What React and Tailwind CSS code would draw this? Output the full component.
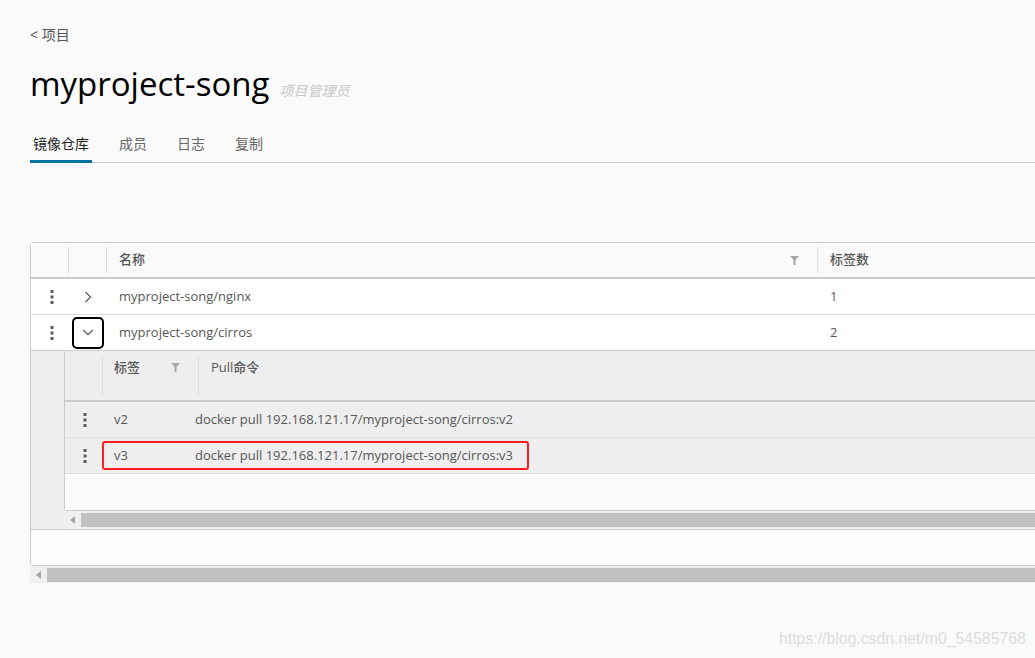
import React from 'react';

const Dots = () => (
    <svg width="4" height="14" viewBox="0 0 4 14" className="fill-[#5c5c5c]">
        <rect x="0.5" y="0" width="3" height="3" />
        <rect x="0.5" y="5.5" width="3" height="3" />
        <rect x="0.5" y="11" width="3" height="3" />
    </svg>
);

const Filter = () => (
    <svg width="9" height="9" viewBox="0 0 9 9" className="fill-[#a8a8a8]">
        <polygon points="0,0 9,0 5.5,4 5.5,9 3.5,9 3.5,4" />
    </svg>
);

const ChevronRight = () => (
    <svg width="8" height="12" viewBox="0 0 8 12" fill="none" className="stroke-[#666]">
        <path d="M1.5 1 L6.5 6 L1.5 11" strokeWidth="1.4" />
    </svg>
);

const ChevronDown = () => (
    <svg width="12" height="7" viewBox="0 0 12 7" fill="none" className="stroke-[#666]">
        <path d="M1 1 L6 5.5 L11 1" strokeWidth="1.4" />
    </svg>
);

const ArrowLeft = () => (
    <svg width="5" height="8" viewBox="0 0 5 8" className="fill-[#a3a3a3]">
        <polygon points="5,0 5,8 0,4" />
    </svg>
);

const Sep = ({ h = 'h-[26px]' }) => <div className={`w-px ${h} bg-[#ddd] shrink-0`} />;

const tabs = ['镜像仓库', '成员', '日志', '复制'];

const tags = [
    { name: 'v2', cmd: 'docker pull 192.168.121.17/myproject-song/cirros:v2' },
    { name: 'v3', cmd: 'docker pull 192.168.121.17/myproject-song/cirros:v3', marked: true },
];

export default function App() {
    return (
        <div className="w-[1035px] h-[658px] overflow-hidden bg-[#fafafa] relative font-['Open_Sans','Noto_Sans_CJK_SC',sans-serif] text-[#565656]">
            <div className="pl-[30px] pt-[26px]">
                <div className="text-[14px] leading-[18px] h-[18px]">&lt; 项目</div>

                <div className="mt-[20px] flex items-baseline h-[40px]">
                    <h1 className="text-[33px] leading-[40px] text-black">myproject-song</h1>
                    <span className="ml-[10px] text-[14px] italic text-[#c8c8c8]">项目管理员</span>
                </div>

                <div className="mt-[31px] flex gap-[24px] border-b border-[#ccc] w-[1100px]">
                    {tabs.map((t, i) => (
                        <div
                            key={t}
                            className={`px-[3px] pb-[7px] text-[14px] leading-[18px] -mb-px ${
                                i === 0 ? 'text-[#222] border-b-[3px] border-[#0072a3]' : 'text-[#666] border-b-[3px] border-transparent'
                            }`}
                        >
                            {t}
                        </div>
                    ))}
                </div>

                <div className="mt-[79px] w-[1100px]">
                    <div className="border border-[#ccc] rounded-[3px] bg-white text-[13px]">
                        {/* header */}
                        <div className="flex items-center h-[36px] bg-[#fafafa] border-b-2 border-[#ccc]">
                            <div className="w-[37px]" />
                            <Sep />
                            <div className="w-[37px]" />
                            <Sep />
                            <div className="w-[710px] flex items-center justify-between pl-[12px] pr-[18px] font-medium">
                                名称
                                <Filter />
                            </div>
                            <Sep />
                            <div className="pl-[12px] font-medium">标签数</div>
                        </div>

                        {/* row 1 */}
                        <div className="flex items-center h-[36px] border-b border-[#ddd]">
                            <div className="w-[38px] flex justify-center pl-[3px]"><Dots /></div>
                            <div className="w-[38px] flex justify-center"><ChevronRight /></div>
                            <div className="w-[711px] pl-[12px]">myproject-song/nginx</div>
                            <div className="pl-[12px]">1</div>
                        </div>

                        {/* row 2 */}
                        <div className="flex items-center h-[36px] border-b border-[#ccc]">
                            <div className="w-[38px] flex justify-center pl-[3px]"><Dots /></div>
                            <div className="w-[38px] flex justify-center">
                                <div className="w-[32px] h-[32px] border-2 border-black rounded-[5px] flex items-center justify-center">
                                    <ChevronDown />
                                </div>
                            </div>
                            <div className="w-[711px] pl-[12px]">myproject-song/cirros</div>
                            <div className="pl-[12px]">2</div>
                        </div>

                        {/* expanded detail */}
                        <div className="flex bg-[#eee] border-b border-[#ccc]">
                            <div className="w-[33px] shrink-0" />
                            <div className="flex-1">
                                <div className="border-l border-b border-[#ccc] rounded-bl-[3px]">
                                    <div className="flex items-start h-[51px] border-b-2 border-[#ccc] pt-[5px]">
                                        <div className="w-[37px]" />
                                        <Sep h="h-[40px]" />
                                        <div className="w-[95px] flex items-center justify-between pl-[11px] pr-[18px] pt-[2px] font-medium leading-[18px]">
                                            标签
                                            <Filter />
                                        </div>
                                        <Sep h="h-[40px]" />
                                        <div className="pl-[12px] pt-[2px] font-medium leading-[18px]">Pull命令</div>
                                    </div>

                                    {tags.map((t) => (
                                        <div key={t.name} className="relative flex items-center h-[36px] border-b border-[#ddd]">
                                            <div className="w-[38px] flex justify-center pl-[1px]"><Dots /></div>
                                            <div className="w-[92px] pl-[11px]">{t.name}</div>
                                            <div>{t.cmd}</div>
                                            {t.marked && (
                                                <div className="absolute left-[37px] top-[3px] w-[427px] h-[29px] border-2 border-[#ff1f1f] rounded-[3px]" />
                                            )}
                                        </div>
                                    ))}

                                    <div className="h-[36px] bg-[#fafafa]" />
                                </div>

                                <div className="flex items-center h-[18px] bg-[#f0f0f0]">
                                    <div className="w-[17px] flex justify-center"><ArrowLeft /></div>
                                    <div className="flex-1 h-[14px] bg-[#c1c1c1]" />
                                </div>
                            </div>
                        </div>

                        <div className="h-[35px] bg-[#fcfcfc]" />
                    </div>

                    <div className="flex items-center h-[17px] bg-[#f0f0f0]">
                        <div className="w-[17px] flex justify-center"><ArrowLeft /></div>
                        <div className="flex-1 h-[14px] bg-[#c1c1c1]" />
                    </div>
                </div>
            </div>

            <div className="absolute left-[779px] top-[630px] text-[15.8px] leading-[18px] text-[#dcdcdc] font-['Liberation_Sans',Arial,sans-serif]">
                https://blog.csdn.net/m0_54585768
            </div>
        </div>
    );
}
